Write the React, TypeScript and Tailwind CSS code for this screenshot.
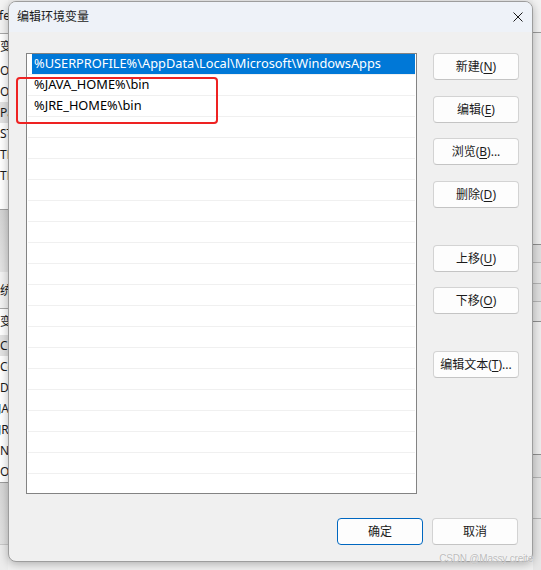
import React from 'react';

const uiFont = "font-['Noto_Sans','Noto_Sans_CJK_SC',sans-serif]";

const listRows = [
  '%USERPROFILE%\\AppData\\Local\\Microsoft\\WindowsApps',
  '%JAVA_HOME%\\bin',
  '%JRE_HOME%\\bin',
  ...Array.from({ length: 18 }, () => ''),
];

function Key({ children }: { children: React.ReactNode }) {
  return <span className="underline underline-offset-2 decoration-[1px]">{children}</span>;
}

function Btn({ children, primary = false }: { children: React.ReactNode; primary?: boolean }) {
  return (
    <button
      className={
        primary
          ? 'w-[86px] h-[27px] shrink-0 rounded-[4px] bg-[#fdfdfd] border-[1.5px] border-[#0067c0] text-[12px] text-[#1b1b1b] flex items-center justify-center'
          : 'w-[86px] h-[27px] shrink-0 rounded-[4px] bg-[#fdfdfd] border border-[#d3d3d3] border-b-[#c4c4c4] text-[12px] text-[#1b1b1b] flex items-center justify-center'
      }
    >
      {children}
    </button>
  );
}

// background window rows peeking out on the left
function BgRow({ text, h = 'h-[21px]', active = false, shift = '' }: { text: string; h?: string; active?: boolean; shift?: string }) {
  return (
    <div className={`${h} flex items-center whitespace-nowrap text-[12px] text-[#1a1a1a] ${active ? 'bg-[#e3e3e3]' : ''}`}>
      <span className={shift}>{text}</span>
    </div>
  );
}

function LeftStrip() {
  return (
    <div className={`w-[8px] h-full shrink-0 flex flex-col overflow-hidden ${uiFont}`}>
      <div className="h-[33px] bg-[#f3f3f3] flex items-center text-[12px] text-[#1a1a1a] whitespace-nowrap pb-[2px]">
        <span className="-ml-[1px]">fe</span>
      </div>
      <div className="h-px bg-[#a8a8a8]" />
      <div className="bg-white flex flex-col">
        <BgRow text="变量" h="h-[26px]" />
        <BgRow text="On" />
        <BgRow text="On" />
        <BgRow text="Pa" active />
        <BgRow text="ST" />
        <BgRow text="TE" />
        <BgRow text="TM" />
        <div className="h-[23px]" />
      </div>
      <div className="h-px bg-[#a0a0a0]" />
      <div className="h-[62px] bg-gradient-to-b from-[#d4d4d4] to-[#e4e4e4]" />
      <div className="h-[36px] bg-[#f3f3f3] flex items-center text-[12px] text-[#1a1a1a] whitespace-nowrap pt-[2px]">
        <span className="-ml-[12px]">系统</span>
      </div>
      <div className="h-px bg-[#a8a8a8]" />
      <div className="bg-white flex flex-col">
        <BgRow text="变量" h="h-[26px]" />
        <BgRow text="CL" active />
        <BgRow text="Co" />
        <BgRow text="Dr" />
        <BgRow text="JA" shift="-ml-[2px]" />
        <BgRow text="JR" shift="-ml-[2px]" />
        <BgRow text="NU" />
        <BgRow text="OS" />
      </div>
      <div className="h-px bg-[#9c9c9c]" />
      <div className="h-[61px] bg-gradient-to-b from-[#d6d6d6] to-[#e2e2e2]" />
      <div className="h-px bg-[#c8c8c8]" />
      <div className="flex-1 bg-[#ececec]" />
    </div>
  );
}

function RightStrip() {
  return (
    <div className="w-[8px] h-full shrink-0 flex flex-col bg-[#e9e9e9]">
      <div className="h-[32px] bg-[#f2f2f2]" />
      <div className="h-px bg-[#9a9a9a]" />
      <div className="h-[211px] bg-[#ededed]" />
      <div className="h-px bg-[#8e8e8e]" />
      <div className="h-[17px] bg-[#dedede]" />
      <div className="h-px bg-[#b4b4b4]" />
      <div className="h-[20px] bg-[#e4e4e4]" />
      <div className="h-px bg-[#b4b4b4]" />
      <div className="h-[17px] bg-[#dedede]" />
      <div className="h-px bg-[#b4b4b4]" />
      <div className="h-[19px] bg-[#e4e4e4]" />
      <div className="h-px bg-[#8e8e8e]" />
      <div className="h-[132px] bg-[#ededed]" />
      <div className="h-px bg-[#8e8e8e]" />
      <div className="h-[22px] bg-[#dedede]" />
      <div className="h-px bg-[#b4b4b4]" />
      <div className="h-[40px] bg-[#e4e4e4]" />
      <div className="h-px bg-[#b4b4b4]" />
      <div className="flex-1 bg-[#e6e6e6]" />
    </div>
  );
}

export default function App() {
  return (
    <div className="relative w-[541px] h-[570px] overflow-hidden bg-[#f0f0f0] flex justify-between">
      <LeftStrip />
      <RightStrip />

      {/* dialog window */}
      <div
        className={`absolute left-[8px] top-[1px] w-[525px] h-[561px] flex flex-col rounded-[8px] border border-[#9d9d9d] bg-[#f0f0f0] shadow-[0_2px_10px_rgba(0,0,0,0.28)] overflow-hidden ${uiFont}`}
      >
        {/* title bar */}
        <div className="h-[30px] shrink-0 bg-[#eef2f8] flex items-center justify-between pl-[8px] pr-[9px]">
          <span className="text-[12px] text-[#1a1a1a]">编辑环境变量</span>
          <svg width="10" height="10" viewBox="0 0 10 10" className="mb-[1px]">
            <path d="M0.5 0.5L9.5 9.5M9.5 0.5L0.5 9.5" stroke="#1a1a1a" strokeWidth="1" />
          </svg>
        </div>

        {/* body */}
        <div className="flex pl-[17px] pt-[21px] pr-[14px]">
          <div className="w-[391px] h-[441px] shrink-0 bg-white border border-[#838383] overflow-hidden">
            {listRows.map((text, i) => (
              <div key={i} className="h-[21px] mx-[1px] border-b border-[#f0f0f0] flex">
                <div
                  className={
                    i === 0
                      ? 'flex-1 ml-[4px] pl-[2px] bg-[#0078d7] text-white text-[12.8px] flex items-center whitespace-nowrap'
                      : 'flex-1 ml-[4px] pl-[2px] text-[#000000] text-[12.8px] flex items-center whitespace-nowrap'
                  }
                >
                  {text}
                </div>
              </div>
            ))}
          </div>

          <div className="ml-[16px] flex flex-col">
            <Btn>新建(<Key>N</Key>)</Btn>
            <div className="mt-[16px]">
              <Btn>编辑(<Key>E</Key>)</Btn>
            </div>
            <div className="mt-[15px]">
              <Btn>浏览(<Key>B</Key>)...</Btn>
            </div>
            <div className="mt-[16px]">
              <Btn>删除(<Key>D</Key>)</Btn>
            </div>
            <div className="mt-[37px]">
              <Btn>上移(<Key>U</Key>)</Btn>
            </div>
            <div className="mt-[15px]">
              <Btn>下移(<Key>O</Key>)</Btn>
            </div>
            <div className="mt-[37px]">
              <Btn>编辑文本(<Key>T</Key>)...</Btn>
            </div>
          </div>
        </div>

        {/* footer */}
        <div className="flex justify-end gap-[9px] pr-[14px] pt-[24px]">
          <Btn primary>确定</Btn>
          <Btn>取消</Btn>
        </div>

        {/* red annotation box */}
        <div className="absolute left-[7px] top-[75px] w-[202px] h-[47px] border-2 border-[#ee2222] rounded-[4px]" />
      </div>

      {/* watermark */}
      <div className="absolute right-[8px] bottom-[6px] text-[10px] leading-none tracking-[-0.2px] text-[#b4b4b4]/90 font-['Liberation_Sans',sans-serif] [text-shadow:0_0_1px_#ffffff]">
        CSDN @Massy creite
      </div>
    </div>
  );
}
